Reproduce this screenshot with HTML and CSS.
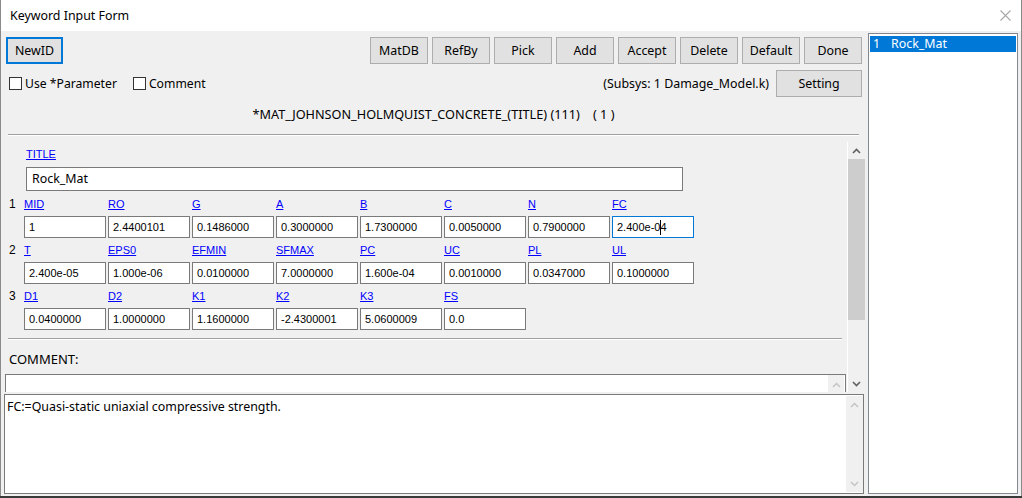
FILE: index.html
```html
<!DOCTYPE html>
<html>
<head>
<meta charset="utf-8">
<title>Keyword Input Form</title>
<link rel="stylesheet" href="styles.css">
</head>
<body>
<div class="window">
  <div class="titlebar">
    <span class="title">Keyword Input Form</span>
    <svg class="close" width="11" height="11" viewBox="0 0 11 11"><path d="M0.5 0.5 L10.5 10.5 M10.5 0.5 L0.5 10.5" stroke="#a8a8a8" stroke-width="1.1" fill="none"/></svg>
  </div>
  <div class="client">
    <div class="form">
      <div class="toolbar">
        <div class="btn btn-default">NewID</div>
        <div class="btn-group">
          <div class="btn">MatDB</div>
          <div class="btn">RefBy</div>
          <div class="btn">Pick</div>
          <div class="btn">Add</div>
          <div class="btn">Accept</div>
          <div class="btn">Delete</div>
          <div class="btn">Default</div>
          <div class="btn">Done</div>
        </div>
      </div>
      <div class="optbar">
        <div class="check"><span class="box"></span><span>Use *Parameter</span></div>
        <div class="check"><span class="box"></span><span>Comment</span></div>
        <span class="subsys">(Subsys: 1 Damage_Model.k)</span>
        <div class="btn btn-setting">Setting</div>
      </div>
      <div class="kwtitle">*MAT_JOHNSON_HOLMQUIST_CONCRETE_(TITLE) (111)&nbsp;&nbsp;&nbsp;&nbsp;( 1 )</div>
      <div class="sep sep-top"></div>
      <div class="scrollwrap">
        <div class="scrollcontent">
          <div class="lbl title-lbl">TITLE</div>
          <div class="title-inp">Rock_Mat</div>
          <div class="fields">
            <div class="frow">
              <div class="num">1</div>
              <div class="lbl">MID</div><div class="lbl">RO</div><div class="lbl">G</div><div class="lbl">A</div>
              <div class="lbl">B</div><div class="lbl">C</div><div class="lbl">N</div><div class="lbl">FC</div>
              <div class="inp">1</div><div class="inp">2.4400101</div><div class="inp">0.1486000</div><div class="inp">0.3000000</div>
              <div class="inp">1.7300000</div><div class="inp">0.0050000</div><div class="inp">0.7900000</div><div class="inp focus">2.400e-0<span class="caret"></span>4</div>
            </div>
            <div class="frow">
              <div class="num">2</div>
              <div class="lbl">T</div><div class="lbl">EPS0</div><div class="lbl">EFMIN</div><div class="lbl">SFMAX</div>
              <div class="lbl">PC</div><div class="lbl">UC</div><div class="lbl">PL</div><div class="lbl">UL</div>
              <div class="inp">2.400e-05</div><div class="inp">1.000e-06</div><div class="inp">0.0100000</div><div class="inp">7.0000000</div>
              <div class="inp">1.600e-04</div><div class="inp">0.0010000</div><div class="inp">0.0347000</div><div class="inp">0.1000000</div>
            </div>
            <div class="frow">
              <div class="num">3</div>
              <div class="lbl">D1</div><div class="lbl">D2</div><div class="lbl">K1</div><div class="lbl">K2</div>
              <div class="lbl">K3</div><div class="lbl">FS</div>
              <div class="inp">0.0400000</div><div class="inp">1.0000000</div><div class="inp">1.1600000</div><div class="inp">-2.4300001</div>
              <div class="inp">5.0600009</div><div class="inp">0.0</div>
            </div>
          </div>
          <div class="sep sep-mid"></div>
          <div class="comment-lbl">COMMENT:</div>
          <div class="comment-inp">
            <div class="mini-sb">
              <svg width="9" height="6" viewBox="0 0 9 6"><polyline points="1,5 4.5,1.5 8,5" fill="none" stroke="#c4c4c4" stroke-width="1.5"/></svg>
            </div>
          </div>
        </div>
        <div class="vscroll">
          <div class="sb-btn">
            <svg width="9" height="6" viewBox="0 0 9 6"><polyline points="1,5 4.5,1.5 8,5" fill="none" stroke="#606060" stroke-width="1.6"/></svg>
          </div>
          <div class="sb-thumb"></div>
          <div class="sb-btn sb-down">
            <svg width="9" height="6" viewBox="0 0 9 6"><polyline points="1,1 4.5,4.5 8,1" fill="none" stroke="#606060" stroke-width="1.6"/></svg>
          </div>
        </div>
      </div>
      <div class="textarea">
        <div class="ta-text">FC:=Quasi-static uniaxial compressive strength.</div>
        <div class="ta-sb">
          <div class="sb-btn">
            <svg width="9" height="6" viewBox="0 0 9 6"><polyline points="1,5 4.5,1.5 8,5" fill="none" stroke="#c4c4c4" stroke-width="1.5"/></svg>
          </div>
          <div class="sb-btn sb-down">
            <svg width="9" height="6" viewBox="0 0 9 6"><polyline points="1,1 4.5,4.5 8,1" fill="none" stroke="#c4c4c4" stroke-width="1.5"/></svg>
          </div>
        </div>
      </div>
    </div>
    <div class="list">
      <div class="list-item selected"><span class="li-num">1</span><span>Rock_Mat</span></div>
    </div>
  </div>
</div>
</body>
</html>
```

FILE: styles.css
```css
* { box-sizing: border-box; margin: 0; padding: 0; }
html, body { width: 1022px; height: 498px; overflow: hidden; }
body {
  background: #3a3a3a;
  font-family: "Noto Sans", "Liberation Sans", sans-serif;
  font-size: 12.4px;
  color: #000;
}
.window {
  width: 1022px;
  height: 496px;
  background: #f0f0f0;
  border-left: 1px solid #8a8a8a;
  border-right: 1px solid #8a8a8a;
  display: flex;
  flex-direction: column;
}
.titlebar {
  height: 31px;
  flex: none;
  background: #fff;
  display: flex;
  align-items: center;
  padding: 0 10px 0 9px;
}
.title { flex: 1; line-height: 16px; }
.close { display: block; }
.client { flex: 1; display: flex; min-height: 0; }
.form { width: 865px; flex: none; display: flex; flex-direction: column; }

.toolbar { display: flex; padding: 6px 4px 0 5px; height: 33px; flex: none; }
.btn {
  height: 27px;
  width: 58px;
  border: 1px solid #adadad;
  background: #e1e1e1;
  display: flex;
  align-items: center;
  justify-content: center;
  line-height: 16px;
}
.btn-default { border: 2px solid #0078d7; width: 57px; }
.btn-group { margin-left: auto; display: flex; gap: 4px; }
.optbar {
  display: flex;
  align-items: center;
  margin-top: 6px;
  height: 27px;
  padding: 0 4px 0 8px;
  flex: none;
}
.check { display: flex; align-items: center; gap: 3px; margin-right: 16px; line-height: 16px; font-size: 12.2px; }
.box { width: 13px; height: 13px; border: 1px solid #333; background: #fff; display: block; }
.subsys { margin-left: auto; margin-right: 7px; line-height: 16px; }
.btn-setting { width: 86px; }
.kwtitle { margin-top: 9px; line-height: 16px; text-align: center; flex: none; font-size: 12.7px; }

.sep { height: 2px; border-top: 1px solid #a0a0a0; border-bottom: 1px solid #fff; flex: none; }
.sep-top { margin: 12px 7px 0 7px; }
.scrollwrap { margin-top: 6px; height: 250px; display: flex; margin-right: 1px; flex: none; }
.scrollcontent { width: 846px; flex: none; overflow: hidden; padding-top: 4px; }
.lbl {
  font-family: "Liberation Sans", Arial, sans-serif;
  font-size: 11px;
  line-height: 16px;
  color: #0000ff;
  text-decoration: underline;
  white-space: nowrap;
}
.title-lbl { margin-left: 25px; }
.title-inp {
  margin: 5px 0 0 25px;
  width: 657px;
  height: 24px;
  border: 1px solid #7a7a7a;
  background: #fff;
  padding-left: 5px;
  line-height: 22px;
}
.fields { padding: 5px 0 0 7px; }
.frow {
  display: grid;
  grid-template-columns: 14px repeat(8, 82px);
  grid-template-rows: 16px 22px;
  column-gap: 2px;
  row-gap: 4px;
  margin-bottom: 4px;
}
.num {
  grid-row: 1 / span 2;
  grid-column: 1;
  line-height: 16px;
  font-family: "Liberation Sans", Arial, sans-serif;
  font-size: 12px;
  padding-left: 1px;
}
.frow .lbl { grid-row: 1; }
.inp {
  grid-row: 2;
  border: 1px solid #7a7a7a;
  background: #fff;
  font-family: "Liberation Sans", Arial, sans-serif;
  font-size: 11px;
  line-height: 20px;
  padding-left: 4px;
  white-space: nowrap;
  overflow: hidden;
}
.inp.focus { border-color: #0078d7; }
.caret {
  display: inline-block;
  width: 1px;
  height: 15px;
  background: #000;
  vertical-align: -4px;
  margin-right: -1px;
}
.sep-mid { margin: 4px 5px 0 7px; }
.fields + .sep-mid { margin-top: 0; }
.fields { padding-bottom: 4px; }
.comment-lbl { margin: 11px 0 0 8px; line-height: 16px; font-size: 13px; }
.comment-inp {
  margin: 7px 0 0 4px;
  width: 841px;
  height: 24px;
  border: 1px solid #7a7a7a;
  background: #fff;
  display: flex;
  justify-content: flex-end;
  padding: 0 1px 0 0;
}
.mini-sb {
  width: 16px;
  height: 22px;
  background: #f0f0f0;
  display: flex;
  justify-content: center;
  padding-top: 7px;
}
.mini-sb svg { display: block; }

.vscroll {
  width: 18px;
  border-left: 1px solid #fff;
  display: flex;
  flex-direction: column;
  flex: none;
}
.sb-btn { height: 17px; display: flex; align-items: center; justify-content: center; flex: none; }
.sb-btn svg { display: block; }
.sb-thumb { height: 161px; background: #cdcdcd; flex: none; }
.sb-down { margin-top: auto; }

.textarea {
  margin: 2px 0 0 3px;
  width: 860px;
  height: 100px;
  border: 1px solid #7a7a7a;
  background: #fff;
  display: flex;
  flex: none;
}
.ta-text { flex: 1; padding: 4px 0 0 2px; line-height: 16px; }
.ta-sb {
  width: 17px;
  margin: 1px 0 1px;
  background: #f0f0f0;
  display: flex;
  flex-direction: column;
}

.list {
  margin: 2px 0 0 2px;
  width: 150px;
  height: 461px;
  border: 1px solid #828790;
  background: #fff;
  padding: 2px 1px 0 1px;
}
.list-item {
  height: 16px;
  line-height: 16px;
  padding-left: 3px;
  display: flex;
}
.list-item.selected { background: #0078d7; color: #fff; }
.li-num { width: 18px; }
```
